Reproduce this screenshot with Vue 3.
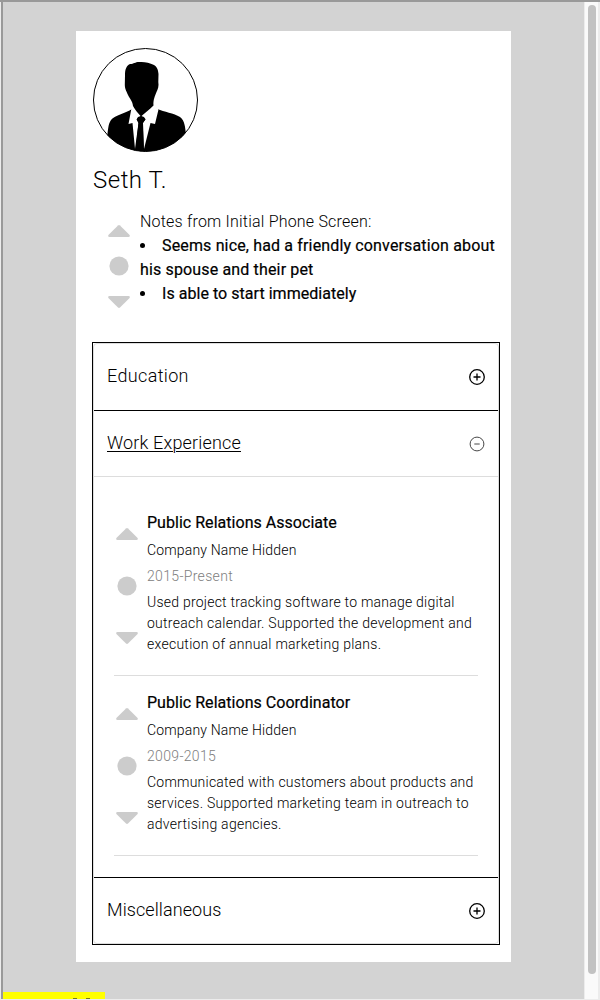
<script setup>
const jobs = [
  {
    title: 'Public Relations Associate',
    dates: '2015-Present',
    lines: [
      'Used project tracking software to manage digital',
      'outreach calendar. Supported the development and',
      'execution of annual marketing plans.',
    ],
  },
  {
    title: 'Public Relations Coordinator',
    dates: '2009-2015',
    lines: [
      'Communicated with customers about products and',
      'services. Supported marketing team in outreach to',
      'advertising agencies.',
    ],
  },
]
</script>

<template>
  <div class="window">
    <main class="pane">
      <article class="card">
        <svg class="avatar" width="105" height="104" viewBox="0 0 105 104">
          <defs>
            <clipPath id="face"><ellipse cx="52.5" cy="52" rx="52" ry="51.5" /></clipPath>
          </defs>
          <g clip-path="url(#face)">
            <path d="M39 61C33 65 22 67 18 72C15 76 15 83 14 90L20 106H86L93 86C92 79 92 73 87 69C81 65 71 64 64.500 61Z" />
            <path fill="#fff" d="M38.500 60L35.500 76L39.500 75L42 101L45.500 75L44 71L48 68L52.500 71L50 75L51 101L57.500 75L62 76L65.500 61.500L60 57Z" />
            <path d="M46 14C42 14 41 16 37 16C33 18 32 22 32 27L31.800 37C32 42 34 44 35 47C37 51 39.500 53 40 58C42 62 45 65 48 68.500C52 65 57 61 60.500 57.500C60 52 62 48 63.500 44C65 41 66 38 65.300 34L65.500 26C65 21 64 19 61 17C56 14.500 51 13.500 46 14Z" />
            <path d="M45 69L48 68L51 69L52.500 71.500L49.800 75L50.500 98L48 105L42.800 100L45.500 75L43.500 71.500Z" />
          </g>
          <ellipse cx="52.5" cy="52" rx="52" ry="51.5" fill="none" stroke="#000" />
        </svg>
        <h1>Seth T.</h1>

        <section class="notes">
          <svg class="vote" width="22" height="83" viewBox="0 0 22 83">
            <path d="M10 .5Q11-.3 12 .5L21.600 10Q22.300 12 20.500 12H1.500Q-.3 12 .4 10Z" />
            <circle cx="11" cy="41" r="9.600" />
            <path d="M10 82.500Q11 83.300 12 82.500L21.600 73Q22.300 71 20.500 71H1.500Q-.3 71 .4 73Z" />
          </svg>
          <div class="note-text">
            <p>Notes from Initial Phone Screen:</p>
            <p class="strong"><i class="dot"></i>Seems nice, had a friendly conversation about</p>
            <p class="strong">his spouse and their pet</p>
            <p class="strong tight"><i class="dot"></i>Is able to start immediately</p>
          </div>
        </section>

        <section class="accordion">
          <div class="inner">
            <header class="head">
              <h2 class="edu">Education</h2>
              <svg width="18" height="18" viewBox="0 0 18 18" fill="none" stroke="#000" stroke-width="1.3"><circle cx="9" cy="9" r="7.300" /><path d="M5.500 9H12.500M9 5.500V12.500" /></svg>
            </header>
            <header class="head ruled">
              <h2 class="open">Work Experience</h2>
              <svg width="18" height="18" viewBox="0 0 18 18" fill="none" stroke="#333" stroke-width=".9"><circle cx="9" cy="9" r="6.900" /><path d="M6.300 9H11.700" /></svg>
            </header>
            <div class="body">
              <div v-for="job in jobs" :key="job.title" class="job">
                <svg class="vote" width="22" height="116" viewBox="0 0 22 116">
                  <path d="M10 .5Q11-.3 12 .5L21.600 10Q22.300 12 20.500 12H1.500Q-.3 12 .4 10Z" />
                  <circle cx="11" cy="58" r="9.600" />
                  <path d="M10 115.500Q11 116.300 12 115.500L21.600 106Q22.300 104 20.500 104H1.500Q-.3 104 .4 106Z" />
                </svg>
                <div class="details">
                  <h3>{{ job.title }}</h3>
                  <p class="company">Company Name Hidden</p>
                  <p class="dates">{{ job.dates }}</p>
                  <p v-for="line in job.lines" :key="line" class="line">{{ line }}</p>
                </div>
              </div>
            </div>
            <header class="head ruled">
              <h2>Miscellaneous</h2>
              <svg width="18" height="18" viewBox="0 0 18 18" fill="none" stroke="#000" stroke-width="1.3"><circle cx="9" cy="9" r="7.300" /><path d="M5.500 9H12.500M9 5.500V12.500" /></svg>
            </header>
          </div>
        </section>
      </article>
      <div class="banner"><i></i><i></i></div>
    </main>
    <aside class="track"><div class="thumb"></div></aside>
  </div>
</template>

<style scoped>
* { box-sizing: border-box; margin: 0; padding: 0; }
.window {
  width: 600px;
  height: 1000px;
  display: flex;
  overflow: hidden;
  background: #ececec;
  border-top: 2px solid #999;
  border-bottom: 1px solid #ececec;
  font-family: Roboto, "Liberation Sans", sans-serif;
  font-weight: 300;
  color: #000;
}
.pane {
  width: 583px;
  margin-left: 1px;
  border-left: 2px solid #999;
  background: #d3d3d3;
  display: flex;
  flex-direction: column;
}
.card { width: 435px; height: 931px; margin: 29px 0 0 73px; padding: 17px 11px 0 16px; background: #fff; flex: none; }
.avatar { display: block; margin-left: 1px; }
h1 { margin: 13px 0 0 1px; font-size: 24px; line-height: 30px; font-weight: 300; letter-spacing: .5px; }
.notes { display: flex; margin-top: 15px; padding-left: 16px; height: 96px; }
.vote { flex: none; display: block; fill: #ccc; }
.notes .vote { margin-top: 15px; }
.note-text { margin-left: 10px; font-size: 16px; line-height: 24px; letter-spacing: .2px; white-space: nowrap; }
.strong, h3 { font-weight: 400; -webkit-text-stroke: .2px #000; }
.strong { letter-spacing: .15px; }
.tight { letter-spacing: .04px; }
.dot { display: inline-block; width: 5px; height: 5px; margin: 0 17px 3px 0; border-radius: 50%; background: #000; vertical-align: middle; }
.accordion { width: 408px; height: 603px; margin-top: 36px; border: 1px solid #000; }
.inner { height: 601px; border: 1px solid #ddd; border-radius: 4px; }
.head { height: 66px; display: flex; align-items: center; justify-content: space-between; padding: 0 12px 0 13px; }
.head svg { display: block; }
.ruled { height: 66px; border-top: 1px solid #000; padding-top: 1px; }
h2 { padding-bottom: 2px; font-size: 18px; line-height: 22px; font-weight: 300; letter-spacing: .08px; }
.edu { letter-spacing: .35px; }
.open { letter-spacing: .17px; text-decoration: underline; text-decoration-thickness: 1px; text-underline-offset: 2px; }
.body { height: 401px; margin: 0 -1px; padding: 19px 21px 0; border-top: 1px solid #ddd; }
.job { height: 180px; display: flex; border-bottom: 1px solid #ddd; padding: 15px 0 0 2px; }
.job .vote { margin-top: 17px; }
.details { margin-left: 9px; white-space: nowrap; }
h3 { font-size: 16px; line-height: 24px; letter-spacing: .03px; }
.company, .dates, .line { font-size: 14px; letter-spacing: .26px; color: #000; }
.company { margin-top: 4px; line-height: 22px; letter-spacing: .16px; }
.dates { margin-top: 4px; line-height: 22px; letter-spacing: .33px; color: #808080; }
.line { line-height: 21px; }
.dates + .line { margin-top: 5px; letter-spacing: .23px; }
.banner { width: 102px; height: 7px; margin-top: 30px; background: #ff0; display: flex; align-items: flex-end; gap: 9px; padding-left: 70px; flex: none; }
.banner i { width: 4px; height: 1px; background: #77771a; }
.track { width: 13px; margin-left: 1px; padding: 3px 2px 0 3px; background: #fafafa; }
.thumb { width: 8px; height: 969px; border-radius: 4px; background: #c2c2c2; }
</style>
